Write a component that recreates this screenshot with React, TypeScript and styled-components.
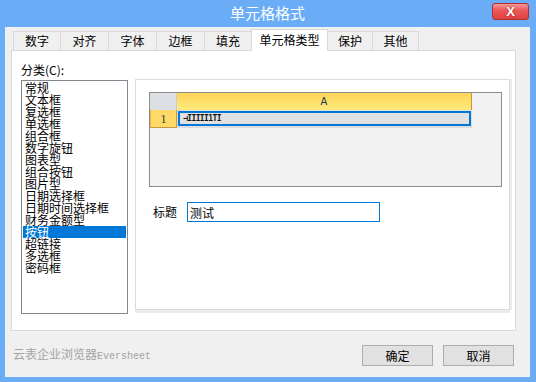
import React from "react";
import styled, { createGlobalStyle } from "styled-components";

const GlobalStyle = createGlobalStyle`
  html, body { margin: 0; padding: 0; }
  body {
    background: #6aadf6;
    font-family: "Noto Sans CJK SC", "Liberation Sans", sans-serif;
    font-size: 12px;
    color: #000;
  }
  * { box-sizing: border-box; }
`;

const Window = styled.div`
  width: 536px;
  height: 382px;
  background: #6aadf6;
  display: flex;
  flex-direction: column;
  padding: 0 6px 5px 5px;
`;

const TitleBar = styled.div`
  height: 27px;
  flex: none;
  display: grid;
  grid-template-columns: 1fr auto 1fr;
  align-items: start;
`;

const Title = styled.div`
  grid-column: 2;
  color: #fff;
  font-size: 15px;
  line-height: 15px;
  padding-top: 5px;
`;

const CloseBtn = styled.div`
  grid-column: 3;
  justify-self: end;
  margin-top: 3px;
  margin-right: 1px;
  width: 37px;
  height: 17px;
  border: 1px solid #b03030;
  border-radius: 3px;
  background: linear-gradient(#f59a9a 0%, #ec5a5a 40%, #e04040 100%);
  color: #fff;
  font: bold 13px/15px "Liberation Sans", sans-serif;
  text-align: center;
  text-shadow: 0 0 2px #9a1f1f;
`;

const Body = styled.div`
  flex: 1;
  background: #f0f0f0;
  display: flex;
  flex-direction: column;
  padding: 2px 14px 0 6px;
`;

const TabRow = styled.div`
  height: 21px;
  display: flex;
  align-items: flex-end;
  padding-left: 2px;
`;

const Tab = styled.div<{ $active?: boolean; $w: number; $first?: boolean }>`
  width: ${(p) => p.$w}px;
  height: ${(p) => (p.$active ? 22 : 19)}px;
  margin-left: ${(p) => (p.$first ? 0 : -1)}px;
  margin-bottom: ${(p) => (p.$active ? -1 : 0)}px;
  padding-bottom: ${(p) => (p.$active ? 2 : 0)}px;
  border: 1px solid #d9d9d9;
  border-bottom: none;
  background: ${(p) => (p.$active ? "#fff" : "#f0f0f0")};
  position: relative;
  z-index: ${(p) => (p.$active ? 1 : 0)};
  display: flex;
  align-items: center;
  justify-content: center;
  font-size: 12px;
  line-height: 12px;
  white-space: nowrap;
`;

const Panel = styled.div`
  width: 505px;
  height: 281px;
  flex: none;
  background: #fff;
  border: 1px solid #d9d9d9;
  display: flex;
  align-items: flex-start;
  gap: 7px;
  padding: 12px 0 0 9px;
`;

const LeftCol = styled.div`
  display: flex;
  flex-direction: column;
  gap: 3px;
`;

const Label = styled.div`
  font-size: 12px;
  line-height: 14px;
  height: 14px;
`;

const ListBox = styled.div`
  width: 107px;
  height: 234px;
  border: 1px solid #828790;
  background: #fff;
  padding: 1px;
`;

const ListItem = styled.div<{ $selected?: boolean }>`
  height: 12px;
  line-height: 12px;
  font-size: 12px;
  padding-left: 2px;
  white-space: nowrap;
  background: ${(p) => (p.$selected ? "#0078d7" : "transparent")};
  color: ${(p) => (p.$selected ? "#fff" : "#000")};
`;

const RightBox = styled.div`
  margin-top: 16px;
  width: 375px;
  height: 231px;
  border: 1px solid #dcdcdc;
  background: #fff;
  box-shadow: 0 3px 0 #ececec, 2px 0 0 #ececec;
  padding: 12px 7px 0 13px;
  display: flex;
  flex-direction: column;
`;

const Grid = styled.div`
  width: 353px;
  height: 95px;
  border: 1px solid #8c8c8c;
  background: #f2f2f2;
  display: flex;
  flex-direction: column;
`;

const GridRow = styled.div<{ $h: number }>`
  display: flex;
  height: ${(p) => p.$h}px;
`;

const Corner = styled.div`
  width: 27px;
  background: #dcdfe4;
  border-right: 1px solid #c9ccd2;
`;

const ColHead = styled.div`
  width: 295px;
  background: linear-gradient(#ffd45a, #ffeb7a);
  border-right: 1px solid #c9973f;
  display: flex;
  align-items: center;
  justify-content: center;
  font: 10px/10px "DejaVu Sans", sans-serif;
  color: #22384e;
`;

const RowHead = styled.div`
  width: 27px;
  background: #ffd966;
  border-right: 1px solid #c9973f;
  border-bottom: 1px solid #c9973f;
  border-left: 1px solid #e0b050;
  display: flex;
  align-items: center;
  justify-content: center;
  font: 12px/12px "Liberation Serif", serif;
  color: #22384e;
`;

const DataArea = styled.div`
  width: 295px;
  background: #dcdee2;
  padding: 1px 1px 2px 1px;
  display: flex;
`;

const CellBox = styled.div`
  flex: 1;
  border: 2px solid #0078d7;
  background: #e1e1e1;
  display: flex;
  align-items: center;
  padding-left: 3px;
  font: bold 8px/8px "DejaVu Sans Mono", monospace;
  letter-spacing: -0.6px;
  color: #111;
`;

const FieldRow = styled.div`
  margin-top: 15px;
  display: flex;
  align-items: center;
  gap: 10px;
  padding-left: 4px;
`;

const FieldLabel = styled.div`
  font-size: 12px;
  line-height: 14px;
`;

const TextInput = styled.input`
  width: 193px;
  height: 20px;
  border: 1px solid #0078d7;
  background: #fff;
  padding: 0 2px;
  margin: 0;
  font-family: "Noto Sans CJK SC", sans-serif;
  font-size: 12px;
  color: #000;
  outline: none;
`;

const Footer = styled.div`
  margin-top: 14px;
  height: 21px;
  display: flex;
  align-items: center;
  justify-content: space-between;
  padding: 0 2px 0 2px;
`;

const Brand = styled.div`
  color: #a3a3a3;
  font-size: 12px;
  line-height: 14px;
  white-space: nowrap;
`;

const Latin = styled.span`
  font-family: "Liberation Mono", monospace;
  font-size: 10px;
`;

const Buttons = styled.div`
  display: flex;
  gap: 10px;
`;

const Button = styled.div`
  width: 71px;
  height: 21px;
  border: 1px solid #adadad;
  background: #e1e1e1;
  display: flex;
  align-items: center;
  justify-content: center;
  font-size: 12px;
  line-height: 12px;
`;

const tabs = [
  { label: "数字", w: 48 },
  { label: "对齐", w: 49 },
  { label: "字体", w: 49 },
  { label: "边框", w: 49 },
  { label: "填充", w: 48 },
  { label: "单元格类型", w: 77, active: true },
  { label: "保护", w: 46 },
  { label: "其他", w: 47 },
];

const items = [
  "常规",
  "文本框",
  "复选框",
  "单选框",
  "组合框",
  "数字旋钮",
  "图表型",
  "组合按钮",
  "图片型",
  "日期选择框",
  "日期时间选择框",
  "财务金额型",
  "按钮",
  "超链接",
  "多选框",
  "密码框",
];

export default function App() {
  return (
    <>
      <GlobalStyle />
      <Window>
        <TitleBar>
          <Title>单元格格式</Title>
          <CloseBtn>X</CloseBtn>
        </TitleBar>
        <Body>
          <TabRow>
            {tabs.map((t, i) => (
              <Tab key={t.label} $w={t.w} $active={t.active} $first={i === 0}>
                {t.label}
              </Tab>
            ))}
          </TabRow>
          <Panel>
            <LeftCol>
              <Label>分类(C):</Label>
              <ListBox>
                {items.map((it) => (
                  <ListItem key={it} $selected={it === "按钮"}>
                    {it}
                  </ListItem>
                ))}
              </ListBox>
            </LeftCol>
            <RightBox>
              <Grid>
                <GridRow $h={17}>
                  <Corner />
                  <ColHead>A</ColHead>
                </GridRow>
                <GridRow $h={18}>
                  <RowHead>1</RowHead>
                  <DataArea>
                    <CellBox>⊣IIIII1TI</CellBox>
                  </DataArea>
                </GridRow>
              </Grid>
              <FieldRow>
                <FieldLabel>标题</FieldLabel>
                <TextInput readOnly value="测试" />
              </FieldRow>
            </RightBox>
          </Panel>
          <Footer>
            <Brand>
              云表企业浏览器<Latin>Eversheet</Latin>
            </Brand>
            <Buttons>
              <Button>确定</Button>
              <Button>取消</Button>
            </Buttons>
          </Footer>
        </Body>
      </Window>
    </>
  );
}
